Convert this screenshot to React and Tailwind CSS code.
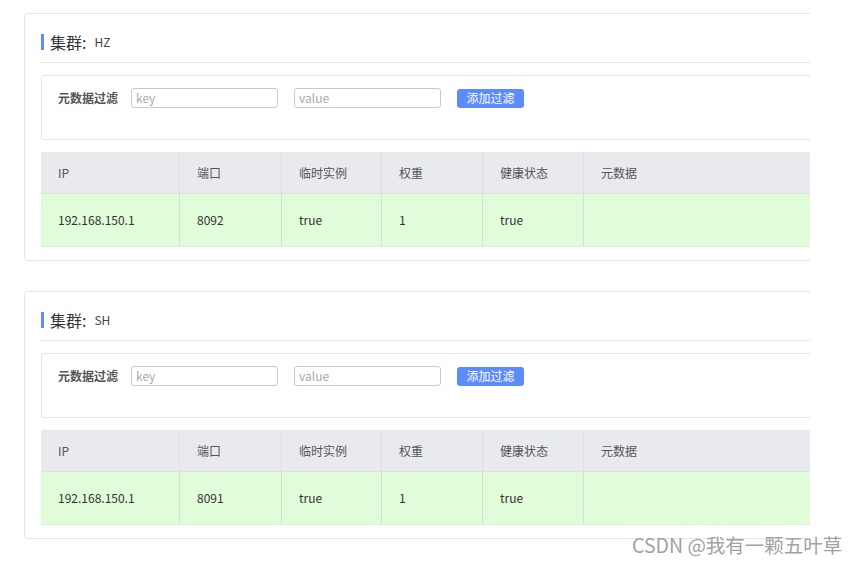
const columns = [
  { label: "IP", w: "w-[139px]" },
  { label: "端口", w: "w-[102px]" },
  { label: "临时实例", w: "w-[100px]" },
  { label: "权重", w: "w-[101px]" },
  { label: "健康状态", w: "w-[101px]" },
  { label: "元数据", w: "w-[226px]" },
];

const ClusterCard = ({ name, port }) => {
  const row = ["192.168.150.1", port, "true", "1", "true", ""];
  return (
    <div className="w-[900px] border border-[#e4e6ea] rounded-[3px] bg-white pl-4 pb-[13px]">
      {/* title */}
      <div className="flex items-center h-[16px] mt-[20px] mb-[12px]">
        <span className="w-[3px] h-[16px] bg-[#5b8cf7] mr-[6px]" />
        <span className="text-[16px] text-[#333] leading-none">集群:</span>
        <span className="text-[12px] text-[#444] ml-[8px] leading-none">{name}</span>
      </div>
      <div className="border-t border-[#e8e8ec] w-[860px]" />

      {/* filter */}
      <div className="mt-[12px] h-[65px] w-[860px] border border-[#e4e6ea] rounded-[3px] pt-[12px] pl-[16px]">
        <div className="flex items-center h-[20px]">
          <span className="text-[12px] font-bold text-[#555] w-[73px]">元数据过滤</span>
          <div className="w-[147px] h-[20px] border border-[#c8cad0] rounded-[3px] px-[4px] text-[12px] leading-[18px] text-[#aaa]">key</div>
          <div className="ml-[16px] w-[147px] h-[20px] border border-[#c8cad0] rounded-[3px] px-[4px] text-[12px] leading-[18px] text-[#aaa]">value</div>
          <button className="ml-[16px] w-[67px] h-[19px] bg-[#5b8cf9] text-white text-[12px] rounded-[3px] leading-none">添加过滤</button>
        </div>
      </div>

      {/* table */}
      <div className="mt-[12px] text-[12px] text-[#555]">
        <div className="flex h-[42px] bg-[#e9eaee] border-b border-[#dfe1e6]">
          {columns.map((c, i) => (
            <div key={c.label} className={`${c.w} flex items-center pl-[17px] ${i < 5 ? "border-r border-[#dcdee3]" : ""}`}>
              {c.label}
            </div>
          ))}
        </div>
        <div className="flex h-[53px] bg-[#e1fcd9] border-b border-[#dfe6dc]">
          {columns.map((c, i) => (
            <div key={c.label} className={`${c.w} flex items-center pl-[17px] text-[#333] ${i < 5 ? "border-r border-[#d6dfd3]" : ""}`}>
              {row[i]}
            </div>
          ))}
        </div>
      </div>
    </div>
  );
};

export default function App() {
  return (
    <div
      className="relative w-[859px] h-[563px] bg-white pt-[13px] pl-[24px]"
      style={{ fontFamily: '"Noto Sans CJK SC", "Liberation Sans", sans-serif' }}
    >
      <div className="w-[786px] overflow-hidden">
        <ClusterCard name="HZ" port="8092" />
        <div className="mt-[30px]">
          <ClusterCard name="SH" port="8091" />
        </div>
      </div>
      <div className="absolute left-[632px] top-[530px] text-[19.5px] text-[#a2a2a2] whitespace-nowrap">
        CSDN @我有一颗五叶草
      </div>
    </div>
  );
}
